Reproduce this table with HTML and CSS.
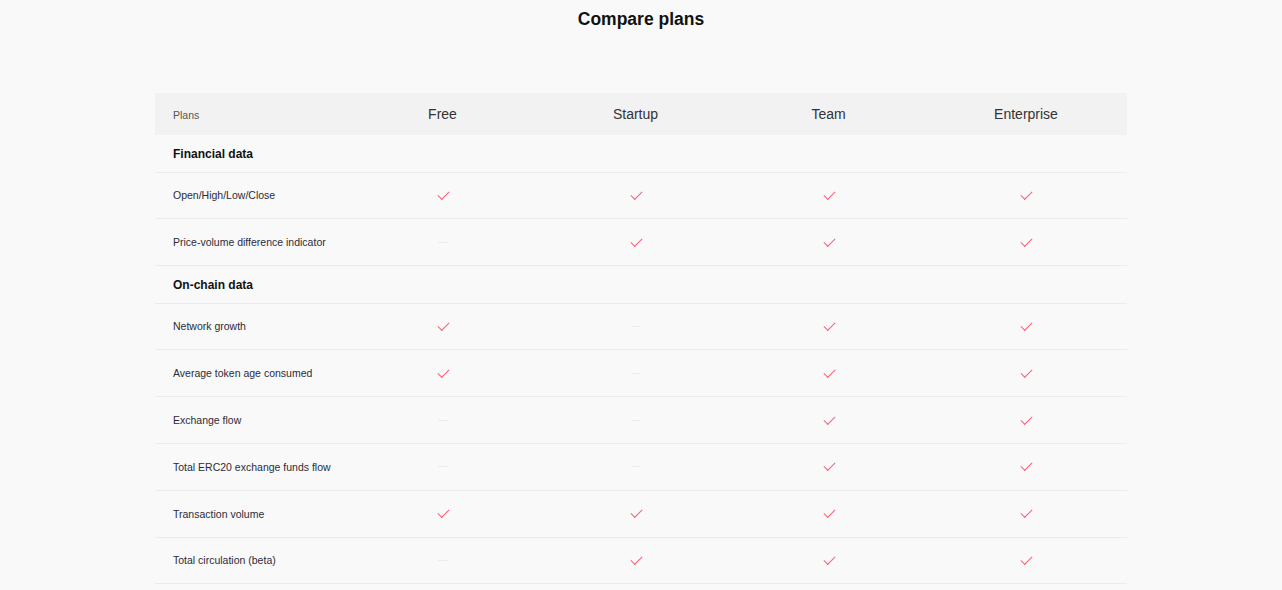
FILE: index.html
```html
<!DOCTYPE html>
<html>
<head>
<meta charset="utf-8">
<link rel="stylesheet" href="styles.css">
</head>
<body>
<div class="page">
  <h1 class="title">Compare plans</h1>
  <div class="table">
    <div class="row head">
      <div class="label">Plans</div>
      <div class="cell">Free</div>
      <div class="cell">Startup</div>
      <div class="cell">Team</div>
      <div class="cell">Enterprise</div>
    </div>
    <div class="row section"><div class="label">Financial data</div></div>
    <div class="row"><div class="label">Open/High/Low/Close</div><div class="cell"><i class="ck"></i></div><div class="cell"><i class="ck"></i></div><div class="cell"><i class="ck"></i></div><div class="cell"><i class="ck"></i></div></div>
    <div class="row"><div class="label">Price-volume difference indicator</div><div class="cell"><i class="dash"></i></div><div class="cell"><i class="ck"></i></div><div class="cell"><i class="ck"></i></div><div class="cell"><i class="ck"></i></div></div>
    <div class="row section"><div class="label">On-chain data</div></div>
    <div class="row"><div class="label">Network growth</div><div class="cell"><i class="ck"></i></div><div class="cell"><i class="dash"></i></div><div class="cell"><i class="ck"></i></div><div class="cell"><i class="ck"></i></div></div>
    <div class="row"><div class="label">Average token age consumed</div><div class="cell"><i class="ck"></i></div><div class="cell"><i class="dash"></i></div><div class="cell"><i class="ck"></i></div><div class="cell"><i class="ck"></i></div></div>
    <div class="row"><div class="label">Exchange flow</div><div class="cell"><i class="dash"></i></div><div class="cell"><i class="dash"></i></div><div class="cell"><i class="ck"></i></div><div class="cell"><i class="ck"></i></div></div>
    <div class="row"><div class="label">Total ERC20 exchange funds flow</div><div class="cell"><i class="dash"></i></div><div class="cell"><i class="dash"></i></div><div class="cell"><i class="ck"></i></div><div class="cell"><i class="ck"></i></div></div>
    <div class="row"><div class="label">Transaction volume</div><div class="cell"><i class="ck"></i></div><div class="cell"><i class="ck"></i></div><div class="cell"><i class="ck"></i></div><div class="cell"><i class="ck"></i></div></div>
    <div class="row"><div class="label">Total circulation (beta)</div><div class="cell"><i class="dash"></i></div><div class="cell"><i class="ck"></i></div><div class="cell"><i class="ck"></i></div><div class="cell"><i class="ck"></i></div></div>
  </div>
</div>
</body>
</html>
```
FILE: styles.css
```css
html, body {
  margin: 0;
  padding: 0;
  background: #f9f9f9;
}
body {
  font-family: "Liberation Sans", Arial, sans-serif;
  color: #333;
}
.page {
  width: 972px;
  margin: 0 auto;
  padding-top: 9px;
}
.title {
  margin: 0;
  text-align: center;
  font-size: 17.5px;
  line-height: 20px;
  font-weight: 700;
  color: #111;
}
.table {
  margin-top: 64px;
}
.row {
  display: grid;
  grid-template-columns: 191px 193px 193px 193px 202px;
  align-items: center;
  height: 45.8px;
  border-bottom: 1px solid #ececec;
}
.row.head {
  height: 42px;
  background: #f2f2f2;
  border-bottom: none;
}
.row.section {
  height: 36.5px;
}
.label {
  padding-left: 18px;
  font-size: 10.5px;
  color: #2b2b3a;
}
.head .label {
  color: #555;
  font-size: 10.5px;
  padding-top: 1px;
}
.head .cell {
  font-size: 14px;
  color: #333;
  padding-bottom: 1px;
}
.section .label {
  font-size: 12px;
  font-weight: 700;
  color: #111;
  padding-top: 2px;
}
.cell {
  display: flex;
  justify-content: center;
  align-items: center;
}
.ck {
  display: block;
  width: 10px;
  height: 5px;
  border-left: 1.4px solid #ff5a76;
  border-bottom: 1.4px solid #ff5a76;
  transform: rotate(-45deg);
  margin-top: -3px;
  margin-left: 1px;
}
.dash {
  display: block;
  width: 10px;
  height: 1px;
  background: #ededed;
}
```
